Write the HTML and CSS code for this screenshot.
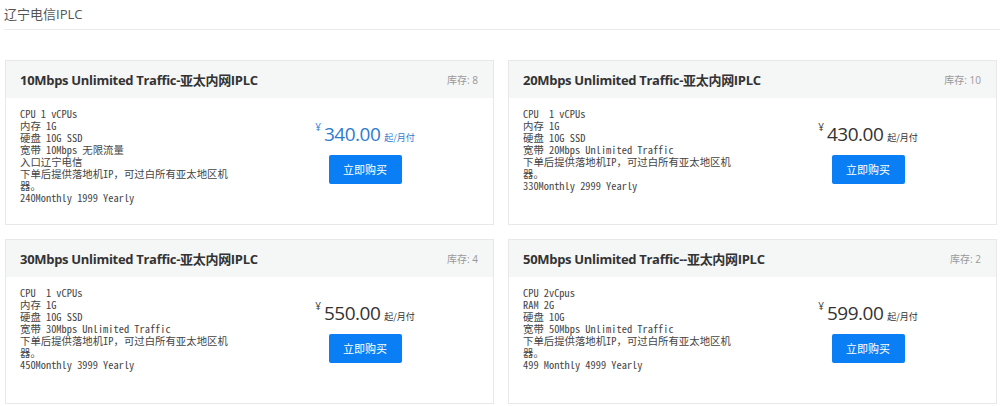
FILE: index.html
```html
<!DOCTYPE html>
<html lang="zh-CN">
<head>
    <meta charset="UTF-8">
    <meta name="viewport" content="width=device-width, initial-scale=1.0">
    <link rel="stylesheet" href="styles.css">
    <title>辽宁电信IPLC</title>
</head>
<body>
    <div class="page">
        <h2 class="group-title">辽宁电信IPLC</h2>
        <div class="divider"></div>

        <div class="plans">
            <!-- 10M -->
            <div class="plan">
                <div class="plan-head">
                    <h3 class="plan-name">10Mbps Unlimited Traffic-亚太内网IPLC</h3>
                    <span class="stock">库存: 8</span>
                </div>
                <div class="plan-body">
                    <div class="specs">CPU 1 vCPUs<br>内存 1G<br>硬盘 10G SSD<br>宽带 10Mbps 无限流量<br>入口辽宁电信<br>下单后提供落地机IP，可过白所有亚太地区机器。<br>240Monthly 1999 Yearly</div>
                    <div class="buy">
                        <div class="price price-blue"><span class="cur">¥</span><span class="amount">340.00</span><span class="unit">起/月付</span></div>
                        <a class="btn" href="#">立即购买</a>
                    </div>
                </div>
            </div>

            <!-- 20M -->
            <div class="plan">
                <div class="plan-head">
                    <h3 class="plan-name">20Mbps Unlimited Traffic-亚太内网IPLC</h3>
                    <span class="stock">库存: 10</span>
                </div>
                <div class="plan-body">
                    <div class="specs">CPU&nbsp; 1 vCPUs<br>内存 1G<br>硬盘 10G SSD<br>宽带 20Mbps Unlimited Traffic<br>下单后提供落地机IP，可过白所有亚太地区机器。<br>330Monthly 2999 Yearly</div>
                    <div class="buy">
                        <div class="price"><span class="cur">¥</span><span class="amount">430.00</span><span class="unit">起/月付</span></div>
                        <a class="btn" href="#">立即购买</a>
                    </div>
                </div>
            </div>

            <!-- 30M -->
            <div class="plan">
                <div class="plan-head">
                    <h3 class="plan-name">30Mbps Unlimited Traffic-亚太内网IPLC</h3>
                    <span class="stock">库存: 4</span>
                </div>
                <div class="plan-body">
                    <div class="specs">CPU&nbsp; 1 vCPUs<br>内存 1G<br>硬盘 10G SSD<br>宽带 30Mbps Unlimited Traffic<br>下单后提供落地机IP，可过白所有亚太地区机器。<br>450Monthly 3999 Yearly</div>
                    <div class="buy">
                        <div class="price"><span class="cur">¥</span><span class="amount">550.00</span><span class="unit">起/月付</span></div>
                        <a class="btn" href="#">立即购买</a>
                    </div>
                </div>
            </div>

            <!-- 50M -->
            <div class="plan">
                <div class="plan-head">
                    <h3 class="plan-name">50Mbps Unlimited Traffic--亚太内网IPLC</h3>
                    <span class="stock">库存: 2</span>
                </div>
                <div class="plan-body">
                    <div class="specs">CPU 2vCpus<br>RAM 2G<br>硬盘 10G<br>宽带 50Mbps Unlimited Traffic<br>下单后提供落地机IP，可过白所有亚太地区机器。<br>499 Monthly 4999 Yearly</div>
                    <div class="buy">
                        <div class="price"><span class="cur">¥</span><span class="amount">599.00</span><span class="unit">起/月付</span></div>
                        <a class="btn" href="#">立即购买</a>
                    </div>
                </div>
            </div>
        </div>
    </div>
</body>
</html>
```

FILE: styles.css
```css
body{
    margin: 0;
    background: #fff;
    color: #333;
    font-family: "Open Sans", "Noto Sans CJK SC", sans-serif;
}
.page{
    padding: 0 0 0 4px;
}
.group-title{
    margin: 0;
    padding-top: 6px;
    height: 23px;
    font-size: 13px;
    font-weight: normal;
    color: #555;
    line-height: 17px;
}
.divider{
    height: 1px;
    background: #ececec;
}
.plans{
    display: grid;
    grid-template-columns: 1fr 1fr;
    column-gap: 14px;
    row-gap: 14px;
    margin: 30px 3px 0 1px;
}
.plan{
    border: 1px solid #e8e8e8;
    background: #fff;
}
.plan-head{
    display: flex;
    align-items: center;
    justify-content: space-between;
    height: 37px;
    padding: 0 15px 0 14px;
    background: #f5f6f6;
}
.plan-name{
    margin: 0;
    font-size: 13px;
    font-weight: bold;
    letter-spacing: -0.3px;
    color: #333;
}
.stock{
    font-size: 10px;
    color: #999;
}
.plan-body{
    display: flex;
    min-height: 96px;
    padding: 10px 15px 20px 14px;
}
.specs{
    width: 218px;
    font-family: "Noto Sans Mono CJK SC", "Liberation Mono", "Noto Sans CJK SC", monospace;
    font-size: 10.4px;
    line-height: 12px;
    color: #444;
}
.buy{
    margin-left: auto;
    margin-right: 23px;
    width: 180px;
    padding-top: 10px;
    display: flex;
    flex-direction: column;
    align-items: center;
}
.price{
    display: flex;
    align-items: flex-end;
    color: #333;
    height: 28px;
}
.price-blue{
    color: #2e7bcf;
}
.cur{
    align-self: flex-start;
    font-size: 10px;
    margin-right: 3px;
    margin-top: 2px;
}
.amount{
    font-size: 19px;
    letter-spacing: -0.5px;
    line-height: 24px;
}
.unit{
    font-family: "Noto Sans CJK SC", sans-serif;
    font-size: 9px;
    margin-left: 4px;
    margin-bottom: 2px;
}
.btn{
    display: block;
    margin-top: 9px;
    width: 73px;
    height: 29px;
    line-height: 29px;
    text-align: center;
    background: #0a7ff5;
    color: #fff;
    font-family: "Noto Sans CJK SC", sans-serif;
    font-size: 11px;
    text-decoration: none;
    border-radius: 2px;
}
```
